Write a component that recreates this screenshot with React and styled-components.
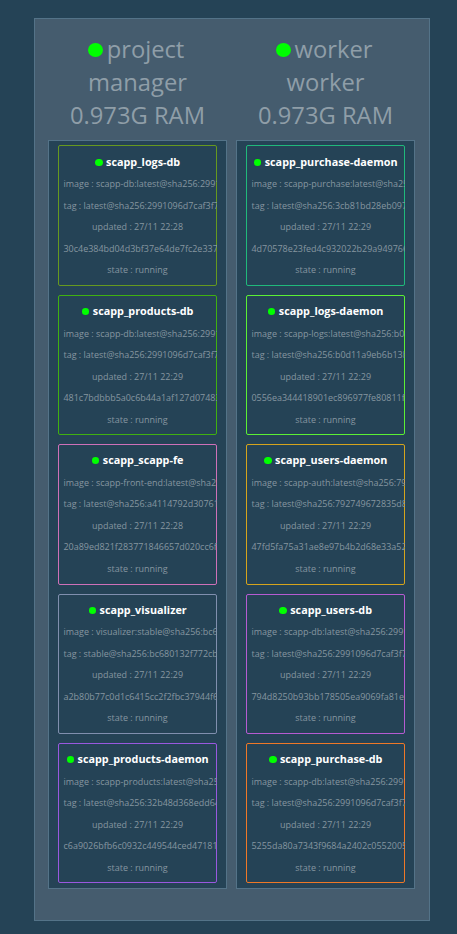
import React from "react";
import styled, { createGlobalStyle } from "styled-components";

const GlobalStyle = createGlobalStyle`
  * { box-sizing: border-box; }
  body {
    margin: 0;
    background: #254356;
    color: #8f9ea8;
    font-family: "Open Sans", "Noto Sans", sans-serif;
  }
`;

const Page = styled.main`
  min-height: 934px;
  padding: 18px 27px 13px 34px;
`;

const Cluster = styled.section`
  display: flex;
  gap: 9px;
  align-items: flex-start;
  width: 396px;
  height: 903px;
  padding: 14px 13px 0;
  border: 1px solid #547388;
  background: #455c6e;
`;

const Node = styled.article`
  width: 179px;
  flex: none;
`;

const NodeHeader = styled.header`
  height: 106.6px;
  padding: 0 18px;
  font-size: 23.75px;
  line-height: 33px;
  text-align: center;
`;

const NodeName = styled.div`
  padding-right: 3px;
`;

const NodeDot = styled.span`
  display: inline-block;
  width: 15px;
  height: 14px;
  margin-right: 4px;
  border-radius: 50%;
  background: #00ff00;
  vertical-align: 1px;
`;

const TaskList = styled.div`
  display: flex;
  flex-direction: column;
  gap: 9px;
  padding: 4.85px 9px 4.35px;
  border: 1px solid #547388;
  background: #254356;
`;

const Task = styled.div`
  height: 140.4px;
  padding: 4.25px 4.5px;
  border: 1px solid ${(p) => p.$color};
  border-radius: 2px;
  overflow: clip;
  overflow-clip-margin: border-box;
  font-size: 8.96px;
  line-height: 21.6px;
  text-align: center;
  white-space: nowrap;
  color: #8696a0;
`;

const TaskName = styled.div`
  height: 22.5px;
  padding-left: 0.5px;
  font-size: 10.8px;
  font-weight: 700;
  color: #fff;
`;

const TaskDot = styled.span`
  display: inline-block;
  width: 7.4px;
  height: 7px;
  margin-right: 3.4px;
  border-radius: 50%;
  background: #00ff00;
`;

const Detail = styled.div`
  height: 21.5px;
`;

const nodes = [
  {
    name: "project",
    role: "manager",
    tasks: [
      ["scapp_logs-db", "#66991f", "scapp-db:latest@sha256:2991096d7caf3f7", "latest@sha256:2991096d7caf3f7b", "28", "30c4e384bd04d3bf37e64de7fc2e3371"],
      ["scapp_products-db", "#40b010", "scapp-db:latest@sha256:2991096d7caf3f7", "latest@sha256:2991096d7caf3f7b", "29", "481c7bdbbb5a0c6b44a1af127d07483"],
      ["scapp_scapp-fe", "#cf70b8", "scapp-front-end:latest@sha256:a411479", "latest@sha256:a4114792d307611", "28", "20a89ed821f283771846657d020cc6fb"],
      ["scapp_visualizer", "#808fae", "visualizer:stable@sha256:bc680132f772", "stable@sha256:bc680132f772cb1", "29", "a2b80b77c0d1c6415cc2f2fbc37944f6b"],
      ["scapp_products-daemon", "#9958df", "scapp-products:latest@sha256:32b48d3", "latest@sha256:32b48d368edd641", "29", "c6a9026bfb6c0932c449544ced471813"],
    ],
  },
  {
    name: "worker",
    role: "worker",
    tasks: [
      ["scapp_purchase-daemon", "#20b97b", "scapp-purchase:latest@sha256:3cb81bd", "latest@sha256:3cb81bd28eb0971", "29", "4d70578e23fed4c932022b29a949766b"],
      ["scapp_logs-daemon", "#5cf034", "scapp-logs:latest@sha256:b0d11a9eb6", "latest@sha256:b0d11a9eb6b13b1", "29", "0556ea344418901ec896977fe80811f4"],
      ["scapp_users-daemon", "#d5a41c", "scapp-auth:latest@sha256:79274967283", "latest@sha256:792749672835d81", "29", "47fd5fa75a31ae8e97b4b2d68e33a524"],
      ["scapp_users-db", "#b65bd2", "scapp-db:latest@sha256:2991096d7caf3f7", "latest@sha256:2991096d7caf3f7b", "29", "794d8250b93bb178505ea9069fa81e4"],
      ["scapp_purchase-db", "#ee7827", "scapp-db:latest@sha256:2991096d7caf3f7", "latest@sha256:2991096d7caf3f7b", "29", "5255da80a7343f9684a2402c0552005b"],
    ],
  },
];

export default function App() {
  return (
    <Page>
      <GlobalStyle />
      <Cluster>
        {nodes.map((node) => (
          <Node key={node.name}>
            <NodeHeader>
              <NodeName><NodeDot />{node.name}</NodeName>
              <div>{node.role}</div>
              <div>0.973G RAM</div>
            </NodeHeader>
            <TaskList>
              {node.tasks.map(([name, color, image, tag, minute, id]) => (
                <Task key={name} $color={color}>
                  <TaskName><TaskDot />{name}</TaskName>
                  <Detail>image : {image}</Detail>
                  <Detail>tag : {tag}</Detail>
                  <Detail>updated : 27/11 22:{minute}</Detail>
                  <Detail>{id}</Detail>
                  <Detail>state : running</Detail>
                </Task>
              ))}
            </TaskList>
          </Node>
        ))}
      </Cluster>
    </Page>
  );
}
